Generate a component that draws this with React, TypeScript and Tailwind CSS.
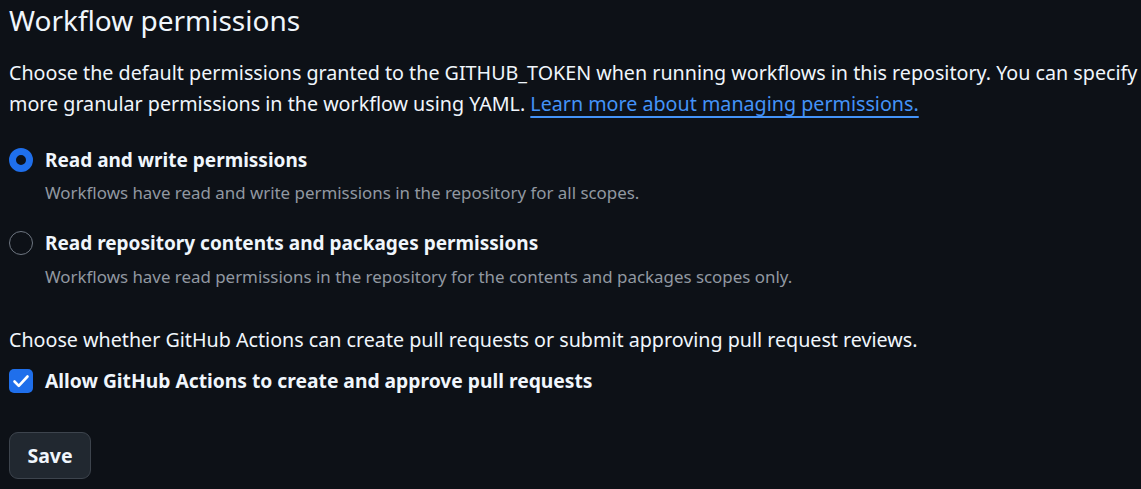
import React from "react";

export default function App() {
  return (
    <div
      className="w-[1141px] h-[489px] overflow-hidden bg-[#0d1117] pl-[9px] text-[#f0f6fc]"
      style={{ fontFamily: '"Noto Sans", "Open Sans", sans-serif' }}
    >
      <h2 className="text-[28px] leading-[40px] font-normal">Workflow permissions</h2>
      <p className="mt-[17px] text-[19.7px] leading-[31px] whitespace-nowrap">
        Choose the default permissions granted to the GITHUB_TOKEN when running workflows in this repository. You can specify
        <br />
        more granular permissions in the workflow using YAML.{" "}
        <a
          href="#"
          className="text-[#4493f8] underline decoration-[2px] underline-offset-[5px]"
        >
          Learn more about managing permissions.
        </a>
      </p>

      <div className="mt-[27px] flex items-center gap-[12px]">
        <span className="w-[24px] h-[24px] rounded-full border-[7px] border-[#1f6feb] bg-[#0d1117] shrink-0" />
        <span className="text-[19px] leading-[28px] font-bold">Read and write permissions</span>
      </div>
      <div className="mt-[7px] pl-[36px] text-[16.9px] leading-[24px] text-[#9198a1]">
        Workflows have read and write permissions in the repository for all scopes.
      </div>

      <div className="mt-[24px] flex items-center gap-[12px]">
        <span className="w-[24px] h-[24px] rounded-full border-[1.5px] border-[#6e7681] shrink-0" />
        <span className="text-[19px] leading-[28px] font-bold">Read repository contents and packages permissions</span>
      </div>
      <div className="mt-[8px] pl-[36px] text-[16.9px] leading-[24px] text-[#9198a1]">
        Workflows have read permissions in the repository for the contents and packages scopes only.
      </div>

      <p className="mt-[36px] text-[19.7px] leading-[30px]">
        Choose whether GitHub Actions can create pull requests or submit approving pull request reviews.
      </p>
      <div className="mt-[12px] flex items-center gap-[12px]">
        <span className="w-[24px] h-[24px] rounded-[5px] bg-[#1f6feb] flex items-center justify-center shrink-0">
          <svg width="24" height="24" viewBox="0 0 24 24" fill="none">
            <path d="M5.5 12.5 L9.8 16.8 L18.5 7.5" stroke="#ffffff" strokeWidth="2.6" strokeLinecap="round" strokeLinejoin="round" />
          </svg>
        </span>
        <span className="text-[19.25px] leading-[28px] font-bold">Allow GitHub Actions to create and approve pull requests</span>
      </div>

      <button className="mt-[37px] h-[47px] w-[82px] rounded-[9px] border border-[#3d444d] bg-[#212830] text-[19.5px] font-bold text-[#f0f6fc]">
        Save
      </button>
    </div>
  );
}
